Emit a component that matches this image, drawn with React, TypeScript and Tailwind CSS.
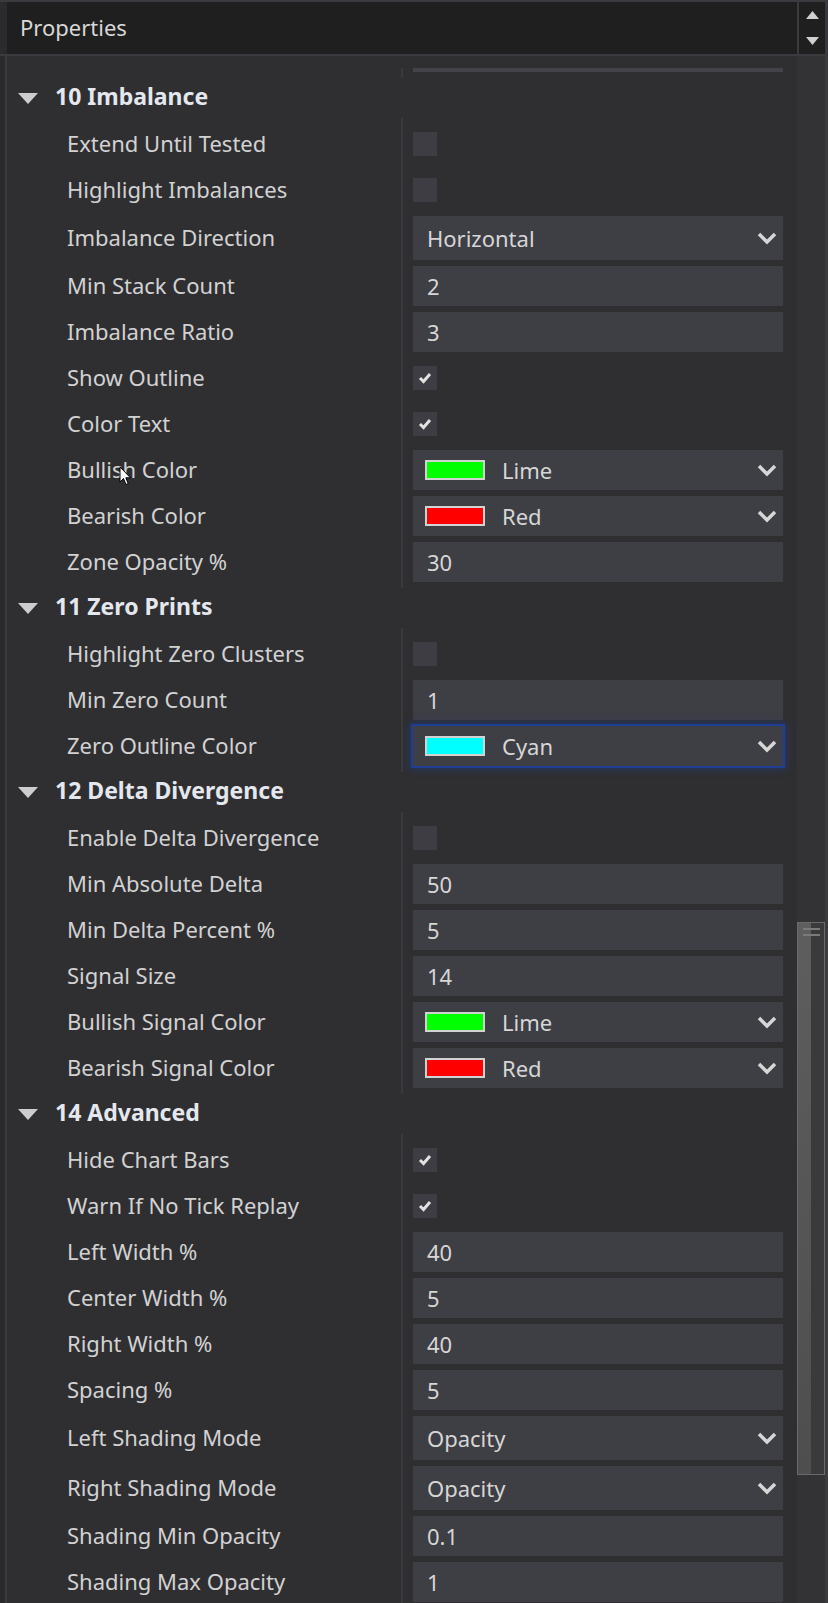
import React from 'react';

type Row = {
    label: string;
    kind: 'check' | 'text' | 'enum' | 'color';
    value?: string;
    checked?: boolean;
    swatch?: string;
    focused?: boolean;
};

type Section = { title: string; rows: Row[] };

const sections: Section[] = [
    {
        title: '10 Imbalance',
        rows: [
            { label: 'Extend Until Tested', kind: 'check' },
            { label: 'Highlight Imbalances', kind: 'check' },
            { label: 'Imbalance Direction', kind: 'enum', value: 'Horizontal' },
            { label: 'Min Stack Count', kind: 'text', value: '2' },
            { label: 'Imbalance Ratio', kind: 'text', value: '3' },
            { label: 'Show Outline', kind: 'check', checked: true },
            { label: 'Color Text', kind: 'check', checked: true },
            { label: 'Bullish Color', kind: 'color', value: 'Lime', swatch: '#00ff00' },
            { label: 'Bearish Color', kind: 'color', value: 'Red', swatch: '#ff0000' },
            { label: 'Zone Opacity %', kind: 'text', value: '30' },
        ],
    },
    {
        title: '11 Zero Prints',
        rows: [
            { label: 'Highlight Zero Clusters', kind: 'check' },
            { label: 'Min Zero Count', kind: 'text', value: '1' },
            { label: 'Zero Outline Color', kind: 'color', value: 'Cyan', swatch: '#00ffff', focused: true },
        ],
    },
    {
        title: '12 Delta Divergence',
        rows: [
            { label: 'Enable Delta Divergence', kind: 'check' },
            { label: 'Min Absolute Delta', kind: 'text', value: '50' },
            { label: 'Min Delta Percent %', kind: 'text', value: '5' },
            { label: 'Signal Size', kind: 'text', value: '14' },
            { label: 'Bullish Signal Color', kind: 'color', value: 'Lime', swatch: '#00ff00' },
            { label: 'Bearish Signal Color', kind: 'color', value: 'Red', swatch: '#ff0000' },
        ],
    },
    {
        title: '14 Advanced',
        rows: [
            { label: 'Hide Chart Bars', kind: 'check', checked: true },
            { label: 'Warn If No Tick Replay', kind: 'check', checked: true },
            { label: 'Left Width %', kind: 'text', value: '40' },
            { label: 'Center Width %', kind: 'text', value: '5' },
            { label: 'Right Width %', kind: 'text', value: '40' },
            { label: 'Spacing %', kind: 'text', value: '5' },
            { label: 'Left Shading Mode', kind: 'enum', value: 'Opacity' },
            { label: 'Right Shading Mode', kind: 'enum', value: 'Opacity' },
            { label: 'Shading Min Opacity', kind: 'text', value: '0.1' },
            { label: 'Shading Max Opacity', kind: 'text', value: '1' },
        ],
    },
];

const font = { fontFamily: '"Noto Sans", "Open Sans", sans-serif' };

function Chevron() {
    return (
        <svg width="22" height="14" viewBox="0 0 22 14" className="shrink-0">
            <polyline points="3,3 11,11 19,3" fill="none" stroke="#d6d6d6" strokeWidth="3.5" />
        </svg>
    );
}

function Value({ row }: { row: Row }) {
    if (row.kind === 'check') {
        return (
            <div className="w-[24px] h-[24px] bg-[#3d3d43] flex items-center justify-center">
                {row.checked && (
                    <svg width="14" height="12" viewBox="0 0 14 12">
                        <polyline points="2,6 5.5,9.5 12,2" fill="none" stroke="#e2e2e2" strokeWidth="3" />
                    </svg>
                )}
            </div>
        );
    }
    if (row.kind === 'color') {
        return (
            <div
                className={
                    'w-full h-[40px] bg-[#3e3e45] flex items-center pl-[12px] pr-[5px] ' +
                    (row.focused ? 'shadow-[0_0_0_2px_#1f3d93,0_0_7px_3px_rgba(31,61,147,0.6)]' : '')
                }
            >
                <div className="w-[60px] h-[20px] border-2 border-[#d2d2d2]" style={{ backgroundColor: row.swatch }} />
                <span className="ml-[17px] flex-1 text-[22px] text-[#d6d6d6]">{row.value}</span>
                <Chevron />
            </div>
        );
    }
    if (row.kind === 'enum') {
        return (
            <div className="w-full h-[44px] bg-[#3e3e45] flex items-center pl-[14px] pr-[5px]">
                <span className="flex-1 text-[22px] text-[#d6d6d6]">{row.value}</span>
                <Chevron />
            </div>
        );
    }
    return (
        <div className="w-full h-[40px] bg-[#3e3e45] flex items-center pl-[14px]">
            <span className="text-[22px] text-[#d6d6d6]">{row.value}</span>
        </div>
    );
}

function Group({ section }: { section: Section }) {
    return (
        <>
            <div className="h-[40px] flex items-center pl-[11px]">
                <svg width="20" height="11" viewBox="0 0 20 11">
                    <polygon points="0,0 20,0 10,11" fill="#cdcdcd" />
                </svg>
                <span className="ml-[17px] text-[23px] font-bold text-[#e4e8ee] -mt-[3px]">{section.title}</span>
            </div>
            <div className="flex">
                <div className="w-[394px] py-[3px] flex flex-col">
                    {section.rows.map((row) => (
                        <div key={row.label} className={(row.kind === 'enum' ? 'h-[50px]' : 'h-[46px]') + ' flex items-center pl-[60px] pb-[2px] text-[22px] text-[#d2d2d2]'}>
                            {row.label}
                        </div>
                    ))}
                </div>
                <div className="w-[2px] bg-[#3a3a3e]" />
                <div className="w-[394px] py-[3px] pl-[10px] pr-[14px] flex flex-col">
                    {section.rows.map((row) => (
                        <div key={row.label} className={(row.kind === 'enum' ? 'h-[50px]' : 'h-[46px]') + ' flex items-center'}>
                            <Value row={row} />
                        </div>
                    ))}
                </div>
            </div>
        </>
    );
}

export default function App() {
    return (
        <div className="w-[828px] h-[1603px] overflow-hidden bg-[#2f2f32] flex flex-col relative" style={font}>
            {/* header */}
            <div className="h-[56px] shrink-0 flex border-t-2 border-b-2 border-[#3b3b3f] bg-[#2b2b2d]">
                <div className="w-[7px] bg-[#2b2b2d]" />
                <div className="w-[790px] bg-[#1f1f1f] flex items-center pl-[13px] pb-[2px] text-[22px] text-[#d8d8d8]">Properties</div>
                <div className="w-[2px] bg-[#3b3b3f]" />
                <div className="w-[26px] bg-[#1f1f1f] flex flex-col items-center justify-between py-[9px]">
                    <svg width="13" height="8" viewBox="0 0 13 8">
                        <polygon points="6.5,0 13,8 0,8" fill="#d0d0d0" />
                    </svg>
                    <svg width="13" height="8" viewBox="0 0 13 8">
                        <polygon points="0,0 13,0 6.5,8" fill="#d0d0d0" />
                    </svg>
                </div>
                <div className="w-[3px] bg-[#3b3b3f]" />
            </div>

            {/* body */}
            <div className="flex flex-1">
                <div className="w-[5px] bg-[#2a2a2c]" />
                <div className="w-[2px] bg-[#3a3a3d]" />
                <div className="w-[790px] flex flex-col">
                    <div className="h-[12px]" />
                    <div className="flex h-[10px]">
                        <div className="w-[394px]" />
                        <div className="w-[2px] bg-[#3a3a3e]" />
                        <div className="w-[394px] pl-[10px] pr-[14px]">
                            <div className="h-[4px] bg-[#434349]" />
                        </div>
                    </div>
                    {sections.map((s) => (
                        <Group key={s.title} section={s} />
                    ))}
                </div>
                <div className="w-[28px] bg-[#333336] flex flex-col">
                    <div className="h-[866px]" />
                    <div className="h-[553px] border border-[#6a6a6a] flex bg-[#3a3a3c]">
                        <div className="w-[13px] bg-gradient-to-b from-[#5e5e5e] to-[#4e4e4e]" />
                        <div className="flex-1 flex flex-col gap-[4px] pt-[5px] -ml-[8px] pr-[4px]">
                            <div className="h-[2px] bg-[#7a7a7a]" />
                            <div className="h-[2px] bg-[#7a7a7a]" />
                        </div>
                    </div>
                </div>
                <div className="w-[3px] bg-[#3b3b3f]" />
            </div>

            {/* mouse cursor */}
            <svg className="absolute left-[119px] top-[466px]" width="13" height="20" viewBox="0 0 13 20">
                <path d="M1 1 L1 16 L4.5 12.5 L7 18.5 L9.2 17.5 L6.8 11.8 L11.5 11.8 Z" fill="#ffffff" stroke="#000000" strokeWidth="1" />
            </svg>
        </div>
    );
}
